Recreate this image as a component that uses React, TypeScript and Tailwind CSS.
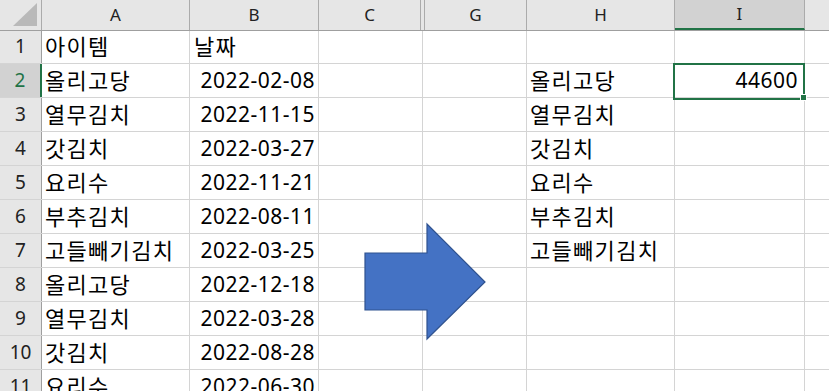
const FONT = "font-['Noto_Sans','Noto_Sans_CJK_KR',sans-serif]";

type Row = { n: number; a: string; b: string; h?: string; i?: string };

const rows: Row[] = [
  { n: 1, a: '아이템', b: '날짜' },
  { n: 2, a: '올리고당', b: '2022-02-08', h: '올리고당', i: '44600' },
  { n: 3, a: '열무김치', b: '2022-11-15', h: '열무김치' },
  { n: 4, a: '갓김치', b: '2022-03-27', h: '갓김치' },
  { n: 5, a: '요리수', b: '2022-11-21', h: '요리수' },
  { n: 6, a: '부추김치', b: '2022-08-11', h: '부추김치' },
  { n: 7, a: '고들빼기김치', b: '2022-03-25', h: '고들빼기김치' },
  { n: 8, a: '올리고당', b: '2022-12-18' },
  { n: 9, a: '열무김치', b: '2022-03-28' },
  { n: 10, a: '갓김치', b: '2022-08-28' },
  { n: 11, a: '요리수', b: '2022-06-30' },
];

function ColumnHeader() {
  const cell = 'flex h-full shrink-0 items-center justify-center border-r border-[#ababab] text-[17px] text-[#222]';
  return (
    <div className="flex h-[31px] border-b border-[#9f9f9f] bg-[#e6e6e6]">
      <div className="relative h-full w-[42px] shrink-0 border-r border-[#ababab]">
        <svg className="absolute left-0 top-0" width="42" height="30">
          <polygon points="13,26 37,26 37,3" fill="#b9b9b9" />
        </svg>
      </div>
      <div className={`${cell} w-[148px]`}>A</div>
      <div className={`${cell} w-[129px]`}>B</div>
      <div className={`${cell} w-[102px]`}>C</div>
      <div className={`${cell} w-[4px]`} />
      <div className={`${cell} w-[102px]`}>G</div>
      <div className={`${cell} w-[148px]`}>H</div>
      <div className={`${cell} w-[130px] border-b-2 border-b-[#217346] bg-[#d2d2d2]`}>I</div>
      <div className="h-full flex-1" />
    </div>
  );
}

function DataRow({ row }: { row: Row }) {
  const selected = row.n === 2;
  const height = row.n === 1 ? 'h-[33px]' : 'h-[34px]';
  const cell = 'flex h-full shrink-0 items-end border-r border-[#d4d4d4] text-black leading-none';
  const hangul = 'pb-[6px] text-[22px] tracking-[1.3px]';
  const num = 'pb-[6px] text-[21px] tracking-[0.5px]';
  return (
    <div className={`flex ${height} border-b border-[#d4d4d4]`}>
      <div
        className={`flex h-full w-[42px] shrink-0 items-end justify-center pb-[7px] text-[19px] leading-none ${
          selected
            ? 'border-r-2 border-r-[#217346] bg-[#d2d2d2] text-[#217346]'
            : 'border-r border-r-[#9f9f9f] bg-[#e6e6e6] text-[#222]'
        }`}
      >
        {row.n}
      </div>
      <div className={`${cell} ${hangul} w-[148px] pl-[3px]`}>{row.a}</div>
      {row.n === 1 ? (
        <div className={`${cell} ${hangul} w-[129px] pl-[4px]`}>{row.b}</div>
      ) : (
        <div className={`${cell} ${num} w-[129px] justify-end pr-[3px]`}>{row.b}</div>
      )}
      <div className={`${cell} w-[104px]`} />
      <div className={`${cell} w-[104px]`} />
      <div className={`${cell} ${hangul} w-[148px] pl-[3px]`}>{row.h}</div>
      <div className={`${cell} ${num} w-[130px] justify-end pr-[6px]`}>{row.i}</div>
      <div className="h-full flex-1" />
    </div>
  );
}

export default function App() {
  return (
    <div className={`relative h-[391px] w-[829px] overflow-hidden bg-white ${FONT}`}>
      <ColumnHeader />
      {rows.map((r) => (
        <DataRow key={r.n} row={r} />
      ))}

      {/* active cell I2 with its fill handle */}
      <div className="pointer-events-none absolute left-[673px] top-[63px] h-[37px] w-[132px] border-2 border-[#217346]" />
      <div className="absolute left-[800px] top-[94px] h-[7px] w-[7px] border border-white bg-[#217346]" />

      {/* block arrow shape */}
      <svg className="absolute left-0 top-0" width="829" height="391">
        <polygon
          points="365,253 427,253 427,224 485,282 427,339 427,310 365,310"
          fill="#4472c4"
          stroke="#2f528f"
          strokeWidth="1.2"
        />
      </svg>
    </div>
  );
}
